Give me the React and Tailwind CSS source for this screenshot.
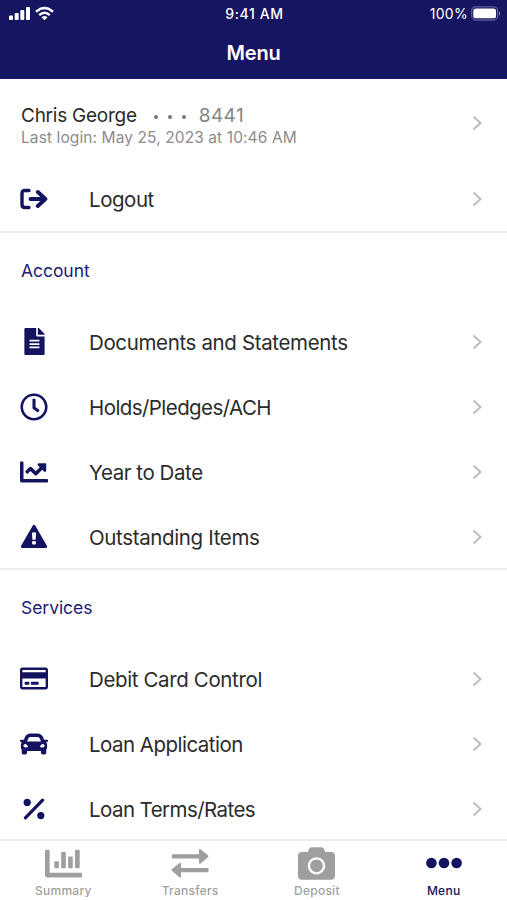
import React from "react";
import {
  FaFileAlt,
  FaRegClock,
  FaChartLine,
  FaRegCreditCard,
  FaCar,
  FaChartBar,
  FaCamera,
} from "react-icons/fa";

function LogoutIcon() {
  return (
    <svg width="28" height="22" viewBox="0 0 28 22" fill="none" stroke="currentColor" strokeLinecap="round" strokeLinejoin="round">
      <path d="M9 2.5H5Q2 2.5 2 5.5V16.5Q2 19.5 5 19.5H9" strokeWidth="3.4" />
      <path d="M10.5 11H24M17.8 4L25.4 11L17.800 18" strokeWidth="3.900" />
    </svg>
  );
}

function WarningIcon() {
  return (
    <svg width="28" height="25" viewBox="0 0 28 25">
      <path d="M14 2.200L25.800 22.600H2.200Z" fill="currentColor" stroke="currentColor" strokeWidth="2.800" strokeLinejoin="round" />
      <path d="M11.900 8.500H16.100L15.600 15.800H12.400Z" fill="#fff" />
      <rect x="12.100" y="17" width="3.800" height="3.600" rx="1" fill="#fff" />
    </svg>
  );
}

function PercentIcon() {
  return (
    <svg width="22" height="22" viewBox="0 0 22 22" fill="currentColor">
      <path d="M2.4 19.8L19.6 2.2" stroke="currentColor" strokeWidth="3.200" strokeLinecap="round" />
      <circle cx="4.200" cy="4.400" r="3.600" />
      <circle cx="17.800" cy="17.600" r="3.600" />
    </svg>
  );
}

function TransfersIcon() {
  return (
    <svg width="38" height="30" viewBox="0 0 38 30" fill="currentColor">
      <path d="M2 6.3H28V2Q28 .6 29.5 1.3L37 7.3Q38 8.3 37 9.3L29.500 15.500Q28 16.200 28 14.700V10.600H2Q.8 10.600 .8 9.400V7.500Q.8 6.300 2 6.300Z" />
      <path d="M36.400 20H10V15.700Q10 14.300 8.500 15L1 21Q0 22 1 23L8.500 29.200Q10 29.900 10 28.400V24.300H36.400Q37.600 24.300 37.600 23.100V21.200Q37.600 20 36.400 20Z" />
    </svg>
  );
}

function MoreIcon() {
  return (
    <svg width="36" height="12" viewBox="0 0 36 12" fill="currentColor">
      <circle cx="5.400" cy="6" r="5.300" />
      <circle cx="18" cy="6" r="5.300" />
      <circle cx="30.600" cy="6" r="5.300" />
    </svg>
  );
}

function Chevron() {
  return (
    <svg className="shrink-0 text-[#bdbdbd]" width="12" height="16" viewBox="0 0 12 16" fill="none" stroke="currentColor" strokeWidth="2">
      <path d="M2.500 1.500L9.500 8L2.500 14.500" />
    </svg>
  );
}

function Row({ icon, label, tracking }) {
  return (
    <div className="flex h-[65px] shrink-0 items-center pl-5 pr-6">
      <div className="flex w-7 justify-center text-[#14135f]">{icon}</div>
      <span className={`ml-[41px] flex-1 whitespace-nowrap pt-[2px] text-[20.5px] leading-6 ${tracking}`}>{label}</span>
      <Chevron />
    </div>
  );
}

function Heading({ children }) {
  return (
    <h2 className="flex h-[76px] shrink-0 items-center pl-[21px] text-[17.5px] tracking-[-0.05px] text-[#211c74]">{children}</h2>
  );
}

function Tab({ icon, label, active }) {
  return (
    <div className={active ? "flex flex-1 flex-col items-center text-[#14135f]" : "flex flex-1 flex-col items-center text-[#9f9f9f]"}>
      <div className="mt-[4px] flex h-9 items-center">{icon}</div>
      <span className="mt-[2px] text-[12px] font-medium leading-4 tracking-[0.25px]">{label}</span>
    </div>
  );
}

function StatusBar() {
  return (
    <div className="grid h-[26px] grid-cols-3 items-center pl-2 pr-[6px] text-[14px] font-medium">
      <div className="flex items-center gap-1">
        <svg width="23" height="16" viewBox="0 0 23 16" fill="currentColor">
          <rect x="1" y="10.500" width="4" height="4.500" rx="1" />
          <rect x="6.700" y="8" width="4" height="7" rx="1" />
          <rect x="12.300" y="5" width="4" height="10" rx="1" />
          <rect x="18" y="2" width="4" height="13" rx="1" />
        </svg>
        <svg width="19" height="15" viewBox="0 0 19 15" fill="none" stroke="currentColor" strokeWidth="2.500">
          <path d="M1 5.800Q9.500 -1.900 18 5.800" />
          <path d="M4.200 9.100Q9.500 4.300 14.800 9.100" />
          <path d="M6.500 11.200Q9.500 8.700 12.500 11.200L9.500 14.200Z" fill="currentColor" stroke="none" />
        </svg>
      </div>
      <span className="text-center tracking-[0.6px]">9:41 AM</span>
      <div className="flex items-center justify-end gap-[3px]">
        <span className="font-normal tracking-[0.3px]">100%</span>
        <svg width="30" height="15" viewBox="0 0 30 15">
          <rect x=".7" y=".8" width="26" height="13.200" rx="4" fill="none" stroke="#5c5a98" strokeWidth="1.300" />
          <rect x="2.300" y="2.500" width="22.800" height="9.800" rx="2.600" fill="#fff" />
          <path d="M28 5Q30.500 7.400 28 9.800Z" fill="#8280b1" />
        </svg>
      </div>
    </div>
  );
}

export default function App() {
  return (
    <div className="flex h-[900px] w-[507px] flex-col overflow-hidden bg-white font-[Inter,'Liberation_Sans',sans-serif] text-[#2b2b2b]">
      <header className="h-[79px] shrink-0 bg-[#161561] text-white">
        <StatusBar />
        <h1 className="mt-[13px] text-center text-[20px] font-semibold leading-[28px] tracking-[-0.2px]">Menu</h1>
      </header>

      <main className="min-h-0 flex-1 overflow-hidden">
        <section className="h-[154px] border-b-2 border-[#ececec]">
          <div className="flex h-[87px] items-center pl-[21px] pr-6">
            <div className="flex-1 pt-[8px]">
              <div className="flex items-center text-[19px] leading-[22px]">
                <span className="tracking-[-0.25px]">Chris George</span>
                <span className="ml-[17px] mt-[2px] flex gap-[10px]">
                  <i className="size-1 rounded-full bg-[#777]" />
                  <i className="size-1 rounded-full bg-[#777]" />
                  <i className="size-1 rounded-full bg-[#777]" />
                </span>
                <span className="ml-[13px] tracking-[0.4px] text-[#858585]">8441</span>
              </div>
              <p className="text-[15.5px] leading-[21px] tracking-[0.1px] text-[#8b8b8b]">Last login: May 25, 2023 at 10:46 AM</p>
            </div>
            <Chevron />
          </div>
          <Row icon={<LogoutIcon />} label="Logout" tracking="tracking-[-0.45px]" />
        </section>

        <section className="h-[337px] border-b-2 border-[#ececec]">
          <Heading>Account</Heading>
          <Row icon={<FaFileAlt size={27} />} label="Documents and Statements" tracking="tracking-[-0.36px]" />
          <Row icon={<FaRegClock size={28} />} label="Holds/Pledges/ACH" tracking="tracking-[-0.57px]" />
          <Row icon={<FaChartLine size={28} />} label="Year to Date" tracking="tracking-[-0.43px]" />
          <Row icon={<WarningIcon />} label="Outstanding Items" tracking="tracking-[-0.36px]" />
        </section>

        <section>
          <Heading>Services</Heading>
          <Row icon={<FaRegCreditCard className="h-[25px] w-7" preserveAspectRatio="none" />} label="Debit Card Control" tracking="tracking-[-0.37px]" />
          <Row icon={<FaCar size={28} />} label="Loan Application" tracking="tracking-[-0.52px]" />
          <Row icon={<PercentIcon />} label="Loan Terms/Rates" tracking="tracking-[-0.57px]" />
        </section>
      </main>

      <nav className="flex h-[61px] shrink-0 border-t-2 border-[#ececec] bg-white">
        <Tab icon={<FaChartBar size={37} />} label="Summary" />
        <Tab icon={<TransfersIcon />} label="Transfers" />
        <Tab icon={<FaCamera size={37} />} label="Deposit" />
        <Tab icon={<MoreIcon />} label="Menu" active />
      </nav>
    </div>
  );
}
